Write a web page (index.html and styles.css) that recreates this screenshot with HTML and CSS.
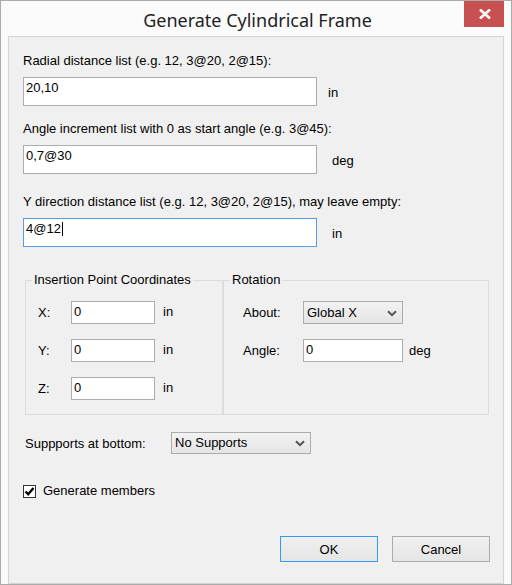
FILE: index.html
```html
<!DOCTYPE html>
<html>
<head>
<meta charset="utf-8">
<link rel="stylesheet" href="styles.css">
</head>
<body>
<div class="window">
  <div class="titlebar">
    <div class="tspacer"></div>
    <div class="title">Generate Cylindrical Frame</div>
    <div class="close">
      <svg width="12" height="10" viewBox="0 0 12 10"><path d="M1 0.5 L11 9.5 M11 0.5 L1 9.5" stroke="#fff" stroke-width="2.6" fill="none"/></svg>
    </div>
  </div>
  <div class="client">
    <div class="field f1">
      <div class="label">Radial distance list (e.g. 12, 3@20, 2@15):</div>
      <div class="row"><div class="edit wide">20,10</div><span class="unit u1">in</span></div>
    </div>
    <div class="field f2">
      <div class="label">Angle increment list with 0 as start angle (e.g. 3@45):</div>
      <div class="row"><div class="edit wide">0,7@30</div><span class="unit">deg</span></div>
    </div>
    <div class="field f3">
      <div class="label">Y direction distance list (e.g. 12, 3@20, 2@15), may leave empty:</div>
      <div class="row"><div class="edit wide focused">4@12<span class="caret"></span></div><span class="unit">in</span></div>
    </div>

    <div class="groups">
      <fieldset class="group g1">
        <legend>Insertion Point Coordinates</legend>
        <div class="grow"><span class="glabel">X:</span><div class="edit small">0</div><span class="gunit">in</span></div>
        <div class="grow"><span class="glabel">Y:</span><div class="edit small">0</div><span class="gunit">in</span></div>
        <div class="grow"><span class="glabel">Z:</span><div class="edit small">0</div><span class="gunit">in</span></div>
      </fieldset>
      <fieldset class="group g2">
        <legend>Rotation</legend>
        <div class="grow"><span class="glabel">About:</span><div class="combo small">Global X<svg class="chev" width="10" height="7" viewBox="0 0 10 7"><path d="M1 1.2 L5 5.2 L9 1.2" stroke="#555" stroke-width="2" fill="none"/></svg></div></div>
        <div class="grow"><span class="glabel">Angle:</span><div class="edit small">0</div><span class="gunit deg">deg</span></div>
      </fieldset>
    </div>

    <div class="supports">
      <span class="slabel">Suppports at bottom:</span>
      <div class="combo scombo">No Supports<svg class="chev" width="10" height="7" viewBox="0 0 10 7"><path d="M1 1.2 L5 5.2 L9 1.2" stroke="#555" stroke-width="2" fill="none"/></svg></div>
    </div>

    <div class="check">
      <span class="box"><svg width="11" height="11" viewBox="0 0 11 11"><path d="M1.5 5.5 L4.2 8.3 L9.5 2" stroke="#000" stroke-width="2.4" fill="none"/></svg></span>
      <span>Generate members</span>
    </div>

    <div class="buttons">
      <div class="btn default">OK</div>
      <div class="btn">Cancel</div>
    </div>
  </div>
</div>
</body>
</html>
```
FILE: styles.css
```css
html, body {
  margin: 0;
  padding: 0;
}
body {
  width: 512px;
  height: 585px;
  font-family: "Liberation Sans", Arial, sans-serif;
  font-size: 13px;
  color: #000;
  background: #fbfbfb;
}
.window {
  width: 510px;
  height: 583px;
  border: 1px solid #ababab;
  background: #fbfbfb;
  display: flex;
  flex-direction: column;
}
.titlebar {
  height: 36px;
  display: grid;
  grid-template-columns: 1fr auto 1fr;
  align-items: start;
}
.title {
  font-family: "Noto Sans", "Open Sans", sans-serif;
  font-size: 18px;
  color: #222;
  line-height: 20px;
  padding-top: 9px;
  padding-left: 3px;
}
.close {
  justify-self: end;
  margin-right: 7px;
  width: 40px;
  height: 26px;
  background: #c75050;
  display: flex;
  align-items: center;
  justify-content: center;
}
.close svg { margin-left: 1px; }
.client {
  margin: 0 7px;
  width: 494px;
  height: 537px;
  border: 1px solid #d4d4d4;
  background: #f0f0f0;
  padding-top: 17px;
}
.field { padding-left: 14px; }
.f2 { margin-top: 16px; }
.f3 { margin-top: 21px; }
.label {
  line-height: 14px;
  height: 14px;
  margin-bottom: 9px;
  white-space: nowrap;
}
.row {
  display: flex;
  align-items: center;
}
.edit {
  box-sizing: border-box;
  border: 1px solid #abadb3;
  background: #fff;
  padding: 3px 2px 0;
  line-height: 14px;
  white-space: nowrap;
}
.edit.wide {
  width: 294px;
  height: 29px;
}
.edit.focused { border-color: #569de5; }
.caret {
  display: inline-block;
  width: 1px;
  height: 14px;
  background: #000;
  vertical-align: top;
  margin-left: 1px;
}
.unit {
  margin-left: 15px;
  margin-top: 2px;
}
.unit.u1 { margin-left: 11px; }

.groups {
  display: flex;
  margin-top: 26px;
  padding-left: 16px;
}
.group {
  margin: 0;
  border: 1px solid #dcdcdc;
  padding: 14px 0 14px;
  box-sizing: border-box;
  min-width: 0;
}
.group legend {
  line-height: 14px;
  padding: 0 2px;
}
.g1 {
  width: 198px;
  padding-left: 12px;
}
.g1 legend { margin-left: -6px; }
.g2 {
  width: 266px;
  padding-left: 19px;
}
.g2 legend { margin-left: -13px; }
.grow {
  display: flex;
  align-items: center;
  height: 23px;
  margin-bottom: 15px;
}
.grow:last-child { margin-bottom: 0; }
.g1 .glabel { width: 33px; }
.g2 .glabel { width: 60px; }
.edit.small {
  width: 84px;
  height: 23px;
  padding-top: 3px;
}
.g2 .edit.small { width: 100px; }
.gunit { margin-left: 8px; margin-top: -2px; }
.gunit.deg { margin-left: 6px; margin-top: 0; }

.combo {
  box-sizing: border-box;
  border: 1px solid #acacac;
  background: linear-gradient(#f2f2f2, #e5e5e5);
  display: flex;
  align-items: center;
  justify-content: space-between;
  padding: 0 5px 0 3px;
  line-height: 14px;
}
.combo.small {
  width: 100px;
  height: 23px;
}
.chev { margin-top: 1px; }

.supports {
  display: flex;
  align-items: center;
  margin-top: 17px;
  padding-left: 16px;
}
.slabel { width: 146px; }
.scombo {
  width: 140px;
  height: 22px;
}
.check {
  display: flex;
  align-items: center;
  margin-top: 30px;
  padding-left: 14px;
  line-height: 14px;
}
.box {
  box-sizing: border-box;
  width: 13px;
  height: 13px;
  border: 1px solid #333;
  background: #fff;
  display: flex;
  align-items: center;
  justify-content: center;
  margin-right: 7px;
}
.buttons {
  display: flex;
  justify-content: flex-end;
  gap: 14px;
  margin-top: 38px;
  padding-right: 13px;
}
.btn {
  box-sizing: border-box;
  width: 98px;
  height: 26px;
  border: 1px solid #acacac;
  background: linear-gradient(#f0f0f0, #e5e5e5);
  display: flex;
  align-items: center;
  justify-content: center;
}
.btn.default { border-color: #3399ff; }
```
